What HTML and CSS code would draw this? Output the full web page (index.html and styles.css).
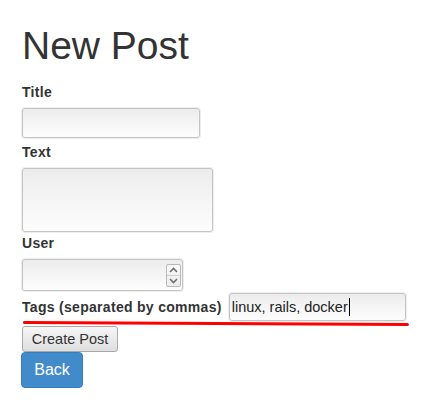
FILE: index.html
```html
<!DOCTYPE html>
<html lang="en">
<head>
<meta charset="utf-8">
<title>New Post</title>
<link rel="stylesheet" href="styles.css">
</head>
<body>
<div class="page">
  <h1 class="title">New Post</h1>
  <form class="form">
    <div class="field">
      <label class="label" for="post_title">Title</label>
      <input class="textbox w-title" id="post_title" type="text">
    </div>
    <div class="field gap-4">
      <label class="label" for="post_text">Text</label>
      <textarea class="textbox area" id="post_text"></textarea>
    </div>
    <div class="field gap-1">
      <label class="label" for="post_user">User</label>
      <div class="textbox numbox">
        <input class="bare" id="post_user" type="text">
        <span class="spin">
          <span class="spin-btn"><svg width="9" height="6" viewBox="0 0 9 6"><path d="M1 5 L4.5 1.5 L8 5" fill="none" stroke="#6f6f6f" stroke-width="1.6"/></svg></span>
          <span class="spin-btn"><svg width="9" height="6" viewBox="0 0 9 6"><path d="M1 1 L4.5 4.5 L8 1" fill="none" stroke="#6f6f6f" stroke-width="1.6"/></svg></span>
        </span>
      </div>
    </div>
    <div class="tags-row">
      <label class="label inline" for="post_tags">Tags (separated by commas)</label>
      <div class="textbox tagbox" id="post_tags"><span>linux, rails, docker</span><span class="caret"></span></div>
      <span class="redline"></span>
    </div>
    <div class="actions">
      <button class="btn-native" type="button">Create Post</button>
    </div>
  </form>
  <a class="btn-back" href="#">Back</a>
</div>
</body>
</html>
```
FILE: styles.css
```css
html, body {
  margin: 0;
  padding: 0;
  background: #fff;
}
body {
  font-family: "Liberation Sans", Arial, sans-serif;
  font-size: 14px;
  line-height: 20px;
  color: #333;
}
.page {
  padding: 0 22px;
  display: flex;
  flex-direction: column;
  align-items: flex-start;
}
.title {
  font-size: 39px;
  font-weight: normal;
  line-height: 44px;
  margin: 24px 0 14px;
  color: #333;
}
.form {
  display: flex;
  flex-direction: column;
  align-items: flex-start;
  margin: 0;
}
.field {
  display: flex;
  flex-direction: column;
  align-items: flex-start;
}
.gap-4 { margin-top: 4px; }
.gap-1 { margin-top: 1px; }
.label {
  font-weight: bold;
  font-size: 14px;
  line-height: 20px;
  letter-spacing: 0.3px;
  margin-bottom: 6px;
  color: #333;
}
.label.inline { margin: 0 7px 0 0; }
.textbox {
  box-sizing: border-box;
  border: 1px solid #c4c4c4;
  border-radius: 3px;
  background: linear-gradient(to bottom, #ececec 0%, #f5f5f5 50%, #fdfdfd 100%);
  box-shadow: 0 0 0 1px #ededed;
  font-family: "Liberation Sans", Arial, sans-serif;
  font-size: 14.5px;
  color: #333;
  margin: 0;
  padding: 0 4px;
  outline: none;
}
.w-title { width: 178px; height: 30px; }
.area { width: 191px; height: 64px; resize: none; display: block; }
.numbox {
  width: 161px;
  height: 32px;
  display: flex;
  align-items: center;
  padding: 0 1px 0 4px;
}
.bare {
  flex: 1;
  min-width: 0;
  border: 0;
  background: transparent;
  outline: none;
  height: 100%;
  padding: 0;
}
.spin {
  display: flex;
  flex-direction: column;
  border: 1px solid #b9b9b9;
  border-radius: 2px;
  background: linear-gradient(to bottom, #f9f9f9, #ececec);
  width: 15px;
  height: 23px;
  box-sizing: border-box;
}
.spin-btn {
  flex: 1;
  display: flex;
  align-items: center;
  justify-content: center;
}
.spin-btn + .spin-btn { border-top: 1px solid #d0d0d0; }
.tags-row {
  position: relative;
  display: flex;
  align-items: center;
  margin-top: 2px;
}
.tagbox {
  width: 177px;
  height: 28px;
  display: flex;
  align-items: center;
  padding: 0 2px;
  color: #222;
  line-height: 18px;
}
.caret {
  display: inline-block;
  width: 1px;
  height: 18px;
  background: #000;
  margin-left: 1px;
}
.redline {
  position: absolute;
  left: 1px;
  top: 28px;
  width: 386px;
  height: 3px;
  background: #f00;
  border-radius: 2px;
  transform: rotate(0.3deg);
  transform-origin: left center;
}
.actions { margin-top: 5px; }
.btn-native {
  box-sizing: border-box;
  width: 96px;
  height: 26px;
  border: 1px solid #a9a9a9;
  border-radius: 3px;
  background: linear-gradient(to bottom, #f6f6f6, #dedede);
  font-family: "Liberation Sans", Arial, sans-serif;
  font-size: 14.5px;
  color: #333;
  padding: 0;
  margin: 0;
}
.btn-back {
  box-sizing: border-box;
  display: flex;
  align-items: center;
  justify-content: center;
  width: 62px;
  height: 36px;
  margin-left: -1px;
  background: #428bca;
  border: 1px solid #357ebd;
  border-radius: 4px;
  color: #fff;
  font-size: 16px;
  text-decoration: none;
}
```
